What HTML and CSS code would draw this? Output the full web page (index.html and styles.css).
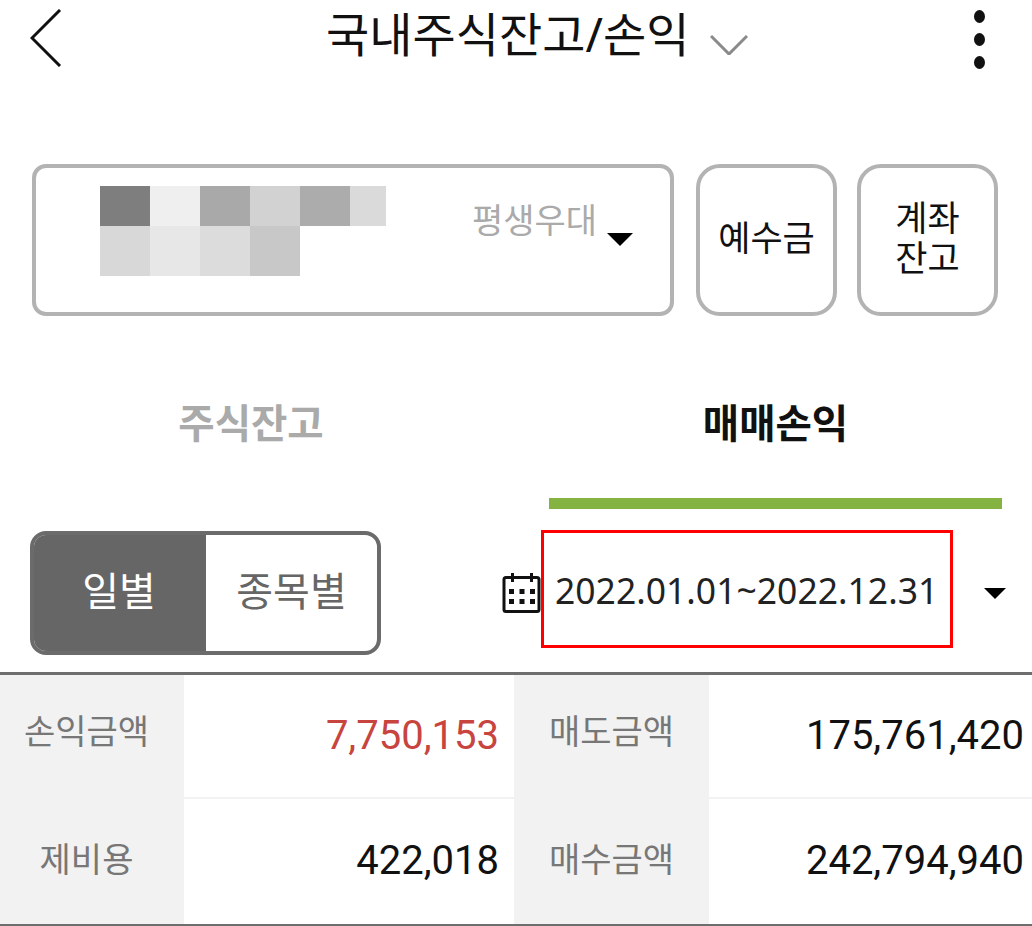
FILE: index.html
```html
<!DOCTYPE html>
<html lang="ko">
  <head>
    <meta charset="UTF-8" />
    <meta name="viewport" content="width=device-width, initial-scale=1.0" />
    <title>국내주식잔고/손익</title>
    <link rel="stylesheet" href="styles.css">
  </head>
  <body>
    <div class="header">
      <svg class="back" width="32" height="58" viewBox="0 0 32 58">
        <path d="M30 1 L2 29 L30 57" />
      </svg>
      <div class="title">국내주식잔고/손익</div>
      <svg class="chevron" width="38" height="20" viewBox="0 0 38 20">
        <path d="M1 1 L19 19 L37 1" />
      </svg>
      <div class="kebab">
        <span></span>
        <span></span>
        <span></span>
      </div>
    </div>

    <div class="account-row">
      <div class="account">
        <!-- 계좌번호 모자이크 -->
        <div class="mosaic">
          <div class="mosaic-line top">
            <i class="c1"></i><i class="c2"></i><i class="c3"></i><i class="c4"></i><i class="c5"></i><i class="c6 short"></i>
          </div>
          <div class="mosaic-line">
            <i class="c7"></i><i class="c8"></i><i class="c9"></i><i class="c10"></i>
          </div>
        </div>
        <div class="account-name">평생우대</div>
        <div class="arrow"></div>
      </div>
      <div class="btn">예수금</div>
      <div class="btn">계좌<br />잔고</div>
    </div>

    <ul class="tabs">
      <li>주식잔고</li>
      <li class="current">매매손익</li>
    </ul>

    <div class="filter">
      <div class="toggle">
        <span class="current">일별</span>
        <span>종목별</span>
      </div>
      <svg class="cal" width="40" height="42" viewBox="0 0 40 42">
        <rect x="2" y="6.5" width="35" height="34" rx="2" />
        <path d="M10.5 2 V11 M29.5 2 V11" />
        <g class="cal-dots">
          <rect x="7" y="18" width="5" height="5" />
          <rect x="17.5" y="18" width="5" height="5" />
          <rect x="28" y="18" width="5" height="5" />
          <rect x="7" y="28" width="5" height="5" />
          <rect x="17.5" y="28" width="5" height="5" />
          <rect x="28" y="28" width="5" height="5" />
        </g>
      </svg>
      <div class="date">2022.01.01~2022.12.31</div>
      <div class="arrow small"></div>
    </div>

    <div class="summary">
      <div class="cell label">손익금액</div>
      <div class="cell value red">7,750,153</div>
      <div class="cell label">매도금액</div>
      <div class="cell value">175,761,420</div>
      <div class="cell label">제비용</div>
      <div class="cell value">422,018</div>
      <div class="cell label">매수금액</div>
      <div class="cell value">242,794,940</div>
    </div>
  </body>
</html>
```

FILE: styles.css
```css
* {
  padding: 0;
  margin: 0;
  box-sizing: border-box;
}
html,
body {
  height: 926px;
  overflow: hidden;
}
body {
  background-color: #fff;
  color: #111;
  font-family: "Noto Sans CJK KR", "Noto Sans", sans-serif;
}
li {
  list-style: none;
}

/* header */
.header {
  display: flex;
  align-items: flex-start;
  height: 164px;
  padding: 9px 0 0 30px;
}
.back path {
  fill: none;
  stroke: #111;
  stroke-width: 3;
}
.title {
  width: 384px;
  margin-left: 264px;
  margin-top: -2px;
  font-family: "Noto Sans", "Noto Sans CJK KR", sans-serif;
  font-size: 47px;
  line-height: 54px;
  white-space: nowrap;
}
.chevron {
  margin: 26px 0 0 0;
}
.chevron path {
  fill: none;
  stroke: #8a8a8a;
  stroke-width: 3;
}
.kebab {
  display: flex;
  flex-direction: column;
  gap: 10px;
  margin: 1px 0 0 226px;
}
.kebab span {
  width: 11px;
  height: 13px;
  border-radius: 50%;
  background-color: #111;
}

/* account */
.account-row {
  display: flex;
  height: 152px;
  padding-left: 32px;
}
.account {
  position: relative;
  display: flex;
  width: 642px;
  border: 4px solid #b3b3b3;
  border-radius: 14px;
  padding: 18px 0 0 64px;
}
.mosaic-line {
  display: flex;
  height: 50px;
}
.mosaic-line.top {
  height: 40px;
}
.mosaic-line i {
  display: block;
  width: 50px;
}
.mosaic-line i.short {
  width: 36px;
}
.c1 { background-color: #7e7e7e; }
.c2 { background-color: #efefef; }
.c3 { background-color: #a9a9a9; }
.c4 { background-color: #d2d2d2; }
.c5 { background-color: #acacac; }
.c6 { background-color: #dadada; }
.c7 { background-color: #d8d8d8; }
.c8 { background-color: #e7e7e7; }
.c9 { background-color: #dcdcdc; }
.c10 { background-color: #c8c8c8; }
.account-name {
  margin-left: 86px;
  margin-top: 11px;
  font-size: 34px;
  line-height: 44px;
  color: #aaa;
  white-space: nowrap;
}
.arrow {
  width: 0;
  height: 0;
  border-left: 13px solid transparent;
  border-right: 13px solid transparent;
  border-top: 13px solid #000;
}
.account .arrow {
  margin: 47px 0 0 10px;
}
.arrow.small {
  border-left-width: 11px;
  border-right-width: 11px;
  border-top-width: 11px;
  margin: 57px 0 0 31px;
}
.btn {
  display: flex;
  align-items: center;
  justify-content: center;
  width: 141px;
  margin-left: 22px;
  padding-bottom: 2px;
  border: 4px solid #b3b3b3;
  border-radius: 24px;
  font-family: "Liberation Sans", "Noto Sans CJK KR", sans-serif;
  font-size: 35px;
  line-height: 40px;
  text-align: center;
}
.btn:last-child {
  margin-left: 20px;
}

/* tabs */
.tabs {
  display: flex;
  height: 215px;
  padding-top: 78px;
}
.tabs li {
  width: 502px;
  font-size: 39.5px;
  line-height: 54px;
  font-weight: 700;
  color: #aaa;
  text-align: center;
}
.tabs li.current {
  position: relative;
  width: 453px;
  margin-left: 47px;
  color: #111;
}
.tabs li.current::after {
  content: "";
  position: absolute;
  left: 0;
  right: 0;
  top: 104px;
  height: 11px;
  background-color: #84b341;
}

/* filter */
.filter {
  display: flex;
  align-items: flex-start;
  height: 141px;
  padding-left: 30px;
}
.toggle {
  display: flex;
  width: 351px;
  height: 124px;
  border: 4px solid #6b6b6b;
  border-radius: 16px;
  overflow: hidden;
  font-size: 40px;
  color: #666;
}
.toggle span {
  display: flex;
  flex: 1;
  align-items: center;
  justify-content: center;
  padding-bottom: 8px;
}
.toggle span.current {
  flex: none;
  width: 172px;
  padding-right: 2px;
  background-color: #666;
  color: #fff;
}
.cal {
  margin: 40px 0 0 121px;
}
.cal rect,
.cal path {
  fill: none;
  stroke: #111;
  stroke-width: 3;
}
.cal .cal-dots rect {
  fill: #111;
  stroke: none;
}
.date {
  width: 412px;
  height: 118px;
  margin: -1px 0 0 -1px;
  padding: 32px 0 0 11px;
  border: 3px solid #f00;
  font-family: "Noto Sans", sans-serif;
  font-size: 35.5px;
  line-height: 50px;
  color: #222;
  white-space: nowrap;
}

/* summary */
.summary {
  display: grid;
  grid-template-columns: 184px 330px 195px 323px;
  grid-template-rows: 122px 127px;
  border-top: 3px solid #6e6e6e;
  border-bottom: 2px solid #6e6e6e;
  height: 254px;
  background-color: #f2f2f2;
}
.cell {
  display: flex;
  align-items: center;
}
.cell.label {
  justify-content: center;
  padding-bottom: 14px;
  font-size: 34px;
  color: #777;
}
.cell.label:nth-child(n+5) {
  padding-bottom: 6px;
}
.cell.label:nth-child(1),
.cell.label:nth-child(5) {
  padding-right: 11px;
}
.cell.value {
  justify-content: flex-end;
  padding-right: 15px;
  padding-bottom: 2px;
  background-color: #fff;
  font-family: Roboto, sans-serif;
  font-size: 40px;
  color: #111;
}
.cell.value:nth-child(n+5) {
  border-top: 2px solid #f2f2f2;
}
.cell.value:nth-child(4),
.cell.value:nth-child(8) {
  padding-right: 8px;
}
.cell.red {
  color: #c8443f;
}
```
